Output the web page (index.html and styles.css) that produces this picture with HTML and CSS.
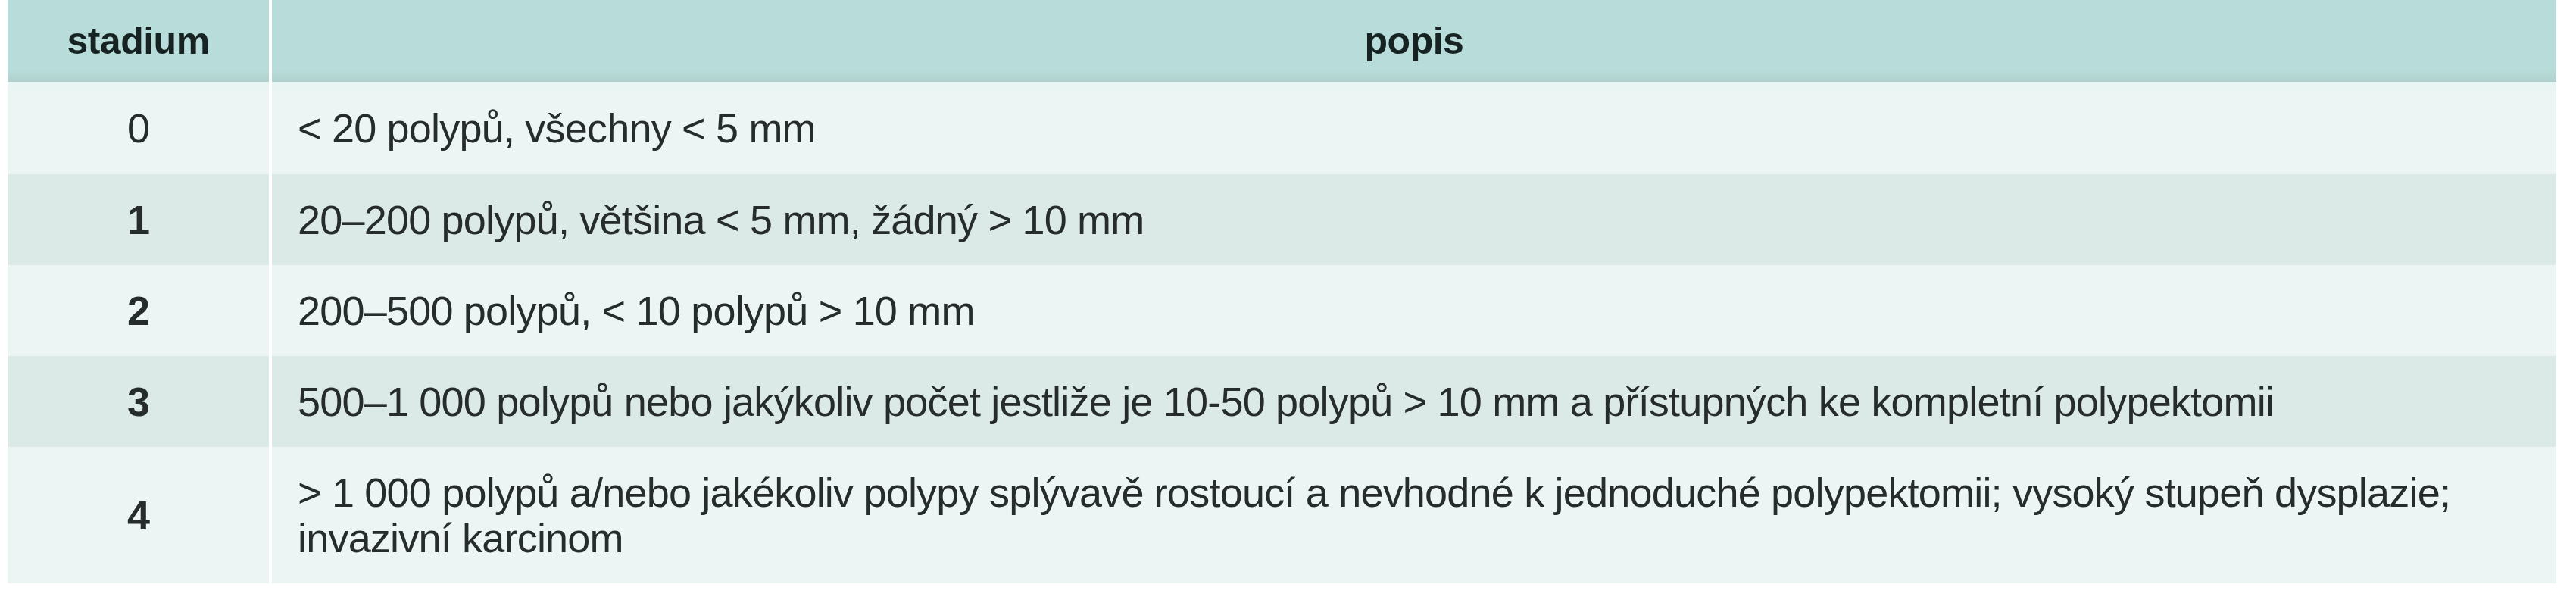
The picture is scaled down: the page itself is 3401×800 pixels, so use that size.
FILE: index.html
```html
<!DOCTYPE html>
<html lang="cs">
<head>
<meta charset="utf-8">
<title>Stadia polypózy</title>
<link rel="stylesheet" href="styles.css">
</head>
<body>
<div class="wrap">
  <table class="stages">
    <colgroup>
      <col class="c-stage">
      <col class="c-desc">
    </colgroup>
    <thead>
      <tr>
        <th class="stage">stadium</th>
        <th class="desc-head">popis</th>
      </tr>
    </thead>
    <tbody>
      <tr class="light">
        <td class="stage">0</td>
        <td class="desc">&lt; 20 polypů, všechny &lt; 5 mm</td>
      </tr>
      <tr class="dark">
        <td class="stage strong">1</td>
        <td class="desc">20–200 polypů, většina &lt; 5 mm, žádný &gt; 10 mm</td>
      </tr>
      <tr class="light">
        <td class="stage strong">2</td>
        <td class="desc">200–500 polypů, &lt; 10 polypů &gt; 10 mm</td>
      </tr>
      <tr class="dark">
        <td class="stage strong">3</td>
        <td class="desc">500–1 000 polypů nebo jakýkoliv počet jestliže je 10-50 polypů &gt; 10 mm a přístupných ke kompletní polypektomii</td>
      </tr>
      <tr class="light">
        <td class="stage strong">4</td>
        <td class="desc">&gt; 1 000 polypů a/nebo jakékoliv polypy splývavě rostoucí a nevhodné k jednoduché polypektomii; vysoký stupeň dysplazie; invazivní karcinom</td>
      </tr>
    </tbody>
  </table>
</div>
</body>
</html>
```

FILE: styles.css
```css
html, body {
  margin: 0;
  padding: 0;
  background: #ffffff;
}

body {
  font-family: "Liberation Sans", Arial, sans-serif;
}

.wrap {
  padding: 0 26px 0 10px;
}

.stages {
  width: 100%;
  border-collapse: separate;
  border-spacing: 0;
  table-layout: fixed;
}

.c-stage {
  width: 349px;
}

.stages th,
.stages td {
  font-size: 54px;
  letter-spacing: -0.8px;
  line-height: 60px;
  padding: 30px 0;
  color: #262b2b;
  vertical-align: middle;
}

.stages th {
  padding: 24px 0;
  font-size: 50px;
  letter-spacing: -0.5px;
  font-weight: bold;
  color: #162322;
  text-align: center;
  background: linear-gradient(to bottom, #b8dcd9 0%, #b8dcd9 86%, #b0d0cc 100%);
}

.stage {
  text-align: center;
  border-right: 4px solid #ffffff;
}

.strong {
  font-weight: bold;
}

.desc {
  text-align: left;
  padding-left: 34px !important;
  padding-right: 34px !important;
}

.light td {
  background: #ecf5f3;
}

.dark td {
  background: #dbeae7;
}

tbody tr:first-child td {
  padding-top: 31px;
  padding-bottom: 31px;
  background: linear-gradient(to bottom, #e6f5f4 0%, #ecf5f3 12%, #ecf5f3 100%);
}
```
